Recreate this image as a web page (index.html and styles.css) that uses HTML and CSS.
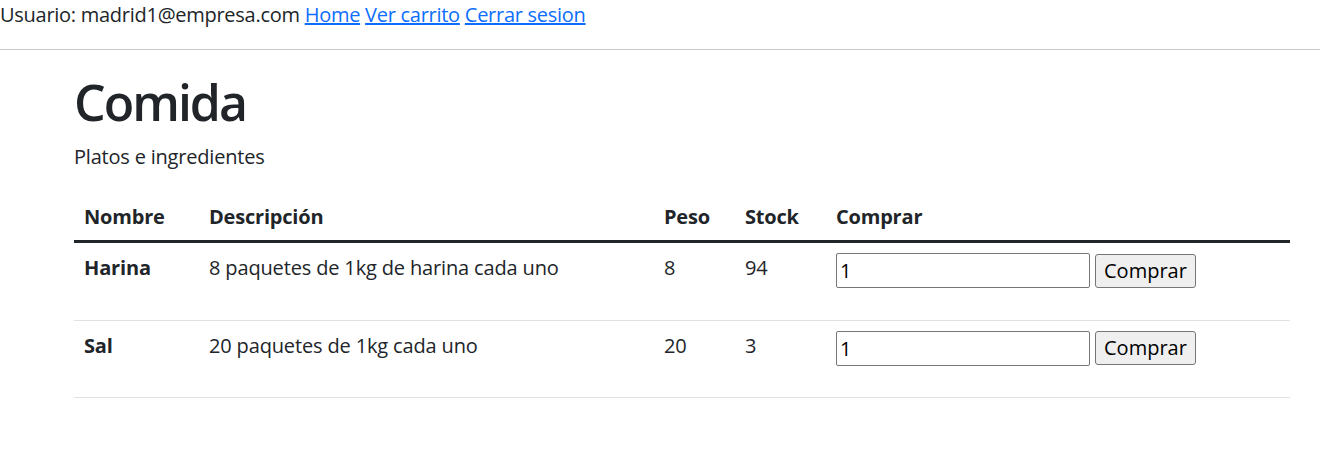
FILE: index.html
```html
<!DOCTYPE html>
<html lang="es">
<head>
<meta charset="utf-8">
<title>Comida</title>
<link rel="stylesheet" href="styles.css">
</head>
<body>
<div class="topbar">Usuario: madrid1@empresa.com <a href="#">Home</a> <a href="#">Ver carrito</a> <a href="#">Cerrar sesion</a></div>
<hr class="sep">
<main class="page">
  <h1 class="title">Comida</h1>
  <p class="lead-text">Platos e ingredientes</p>
  <table class="products">
    <colgroup>
      <col class="c-name"><col class="c-desc"><col class="c-peso"><col class="c-stock"><col class="c-buy">
    </colgroup>
    <thead>
      <tr><th>Nombre</th><th>Descripción</th><th>Peso</th><th>Stock</th><th>Comprar</th></tr>
    </thead>
    <tbody>
      <tr>
        <td class="name">Harina</td>
        <td>8 paquetes de 1kg de harina cada uno</td>
        <td>8</td>
        <td>94</td>
        <td><form class="buy"><input class="qty" type="text" value="1"> <button class="btn" type="button">Comprar</button></form></td>
      </tr>
      <tr>
        <td class="name">Sal</td>
        <td>20 paquetes de 1kg cada uno</td>
        <td>20</td>
        <td>3</td>
        <td><form class="buy"><input class="qty" type="text" value="1"> <button class="btn" type="button">Comprar</button></form></td>
      </tr>
    </tbody>
  </table>
</main>
</body>
</html>
```
FILE: styles.css
```css
* { box-sizing: border-box; }
html, body { margin: 0; padding: 0; background: #fff; }
body {
  font-family: "Open Sans", "Noto Sans", "Liberation Sans", sans-serif;
  font-size: 20px;
  line-height: 30px;
  color: #212529;
}
a { color: #0d6efd; text-decoration: underline; }
.topbar { white-space: nowrap; letter-spacing: -0.27px; }
.sep {
  margin: 19px 0 20px;
  border: 0;
  border-top: 1px solid #c8c9ca;
  height: 0;
}
.page { margin: 0 30px 0 74px; padding-top: 2px; }
.title {
  margin: 0 0 10px;
  font-size: 50px;
  line-height: 60px;
  font-weight: 600;
  letter-spacing: -2px;
}
.lead-text { margin: 0 0 20px; letter-spacing: -0.2px; }
.products {
  width: 1216px;
  border-collapse: collapse;
  table-layout: fixed;
}
.c-name { width: 125px; }
.c-desc { width: 455px; }
.c-peso { width: 81px; }
.c-stock { width: 91px; }
.c-buy { width: 464px; }
.products th {
  text-align: left;
  font-weight: 700;
  padding: 10px 10px 8px;
  border-bottom: 3px solid #212529;
  letter-spacing: -0.2px;
}
.products td {
  padding: 10px;
  vertical-align: top;
  border-bottom: 1px solid #dee2e6;
  letter-spacing: -0.15px;
}
.products td.name { font-weight: 700; }
.buy { margin: 0 0 21.5px; display: flex; align-items: center; gap: 5px; }
.qty {
  width: 254px;
  height: 35px;
  font: inherit;
  color: #000;
  padding: 1px 3px;
  border: 1px solid #767676;
  border-radius: 2px;
  background: #fff;
}
.btn {
  height: 34px;
  font: inherit;
  color: #000;
  padding: 0 8px;
  background: #efefef;
  border: 1px solid #767676;
  border-radius: 3px;
}
```
